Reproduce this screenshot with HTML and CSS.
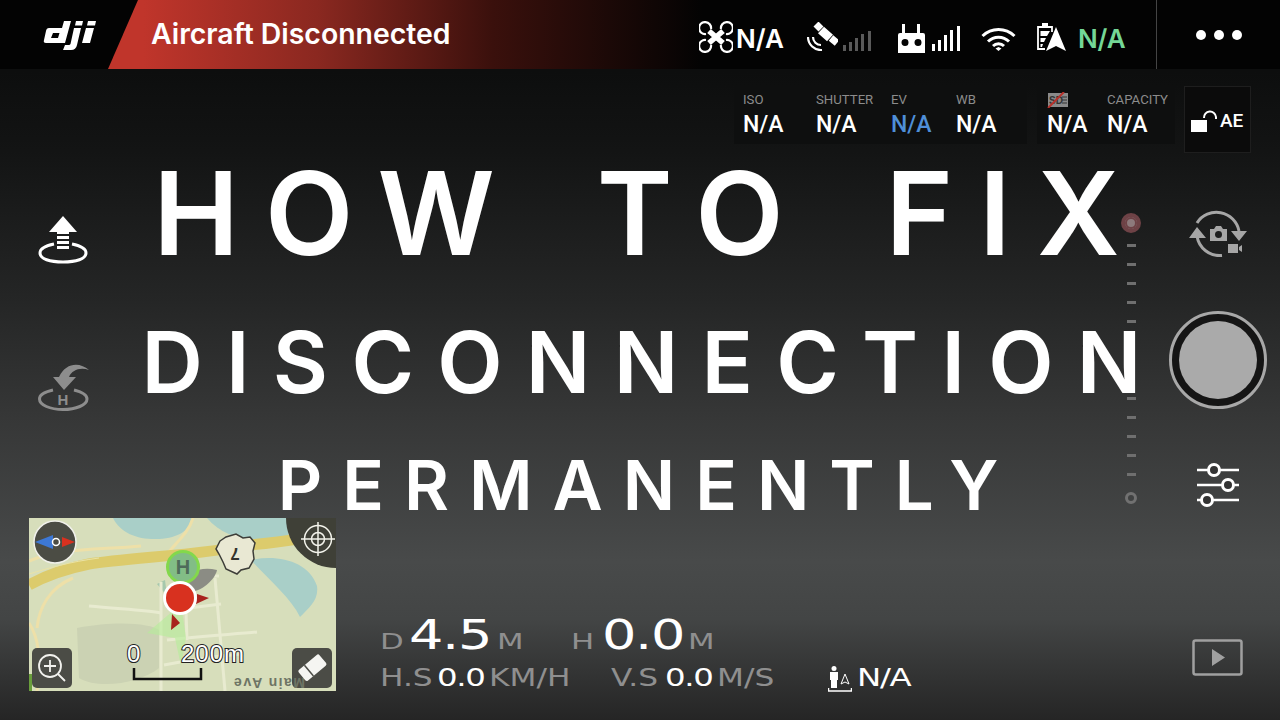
FILE: index.html
```html
<!DOCTYPE html>
<html lang="en">
<head>
    <meta charset="UTF-8">
    <title>How to fix disconnection permanently</title>
    <link rel="stylesheet" href="styles.css">
</head>
<body>
<div class="screen">

    <!-- Top status bar -->
    <div class="topbar">
        <div class="logo-cell">
            <svg class="logo" width="53" height="31" viewBox="0 0 53 31">
                <path fill="#fff" fill-rule="evenodd" d="M4 8H19L21 1H28L22 23H3Q0 23 1 20L3 11Q3.500 8 6 8ZM10 13L8 18H15L16.500 13Z"/>
                <path fill="#fff" d="M33 1H40L39 5.500H32ZM31 8H38L34 25Q33 30 28 30H20L22 25H26Q27 25 27.500 24Z"/>
                <path fill="#fff" d="M45 1H53L52 5.500H44ZM43 8H51L47 23H39Z"/>
            </svg>
        </div>
        <div class="alert">Aircraft Disconnected</div>
        <div class="status">
            <svg class="ic-drone" width="34" height="32" viewBox="0 0 34 32">
                <g fill="none" stroke="#fff" stroke-width="2.200">
                    <path d="M12 8A6 6 0 1 0 7 13"/><path d="M22 8A6 6 0 1 1 27 13"/>
                    <path d="M12 24A6 6 0 1 1 7 19"/><path d="M22 24A6 6 0 1 0 27 19"/>
                </g>
                <path stroke="#fff" stroke-width="5.500" d="M10 10L24 22M24 10L10 22"/>
            </svg>
            <span class="status-na">N/A</span>
            <svg class="ic-sat" width="31" height="29" viewBox="0 0 31 29">
                <path stroke="#fff" stroke-width="7" d="M9 2L14 7"/>
                <path stroke="#fff" stroke-width="7" d="M24 16L30 21"/>
                <path stroke="#fff" stroke-width="9" d="M14 8L23 16"/>
                <g fill="none" stroke="#fff" stroke-width="2.200">
                    <path d="M1 15A13 13 0 0 0 15 28"/><path d="M6 15A8 8 0 0 0 14 23"/>
                </g>
            </svg>
            <svg class="ic-bars" width="29" height="20" viewBox="0 0 29 20">
                <g fill="#5a5a5a"><rect x="0" y="14" width="3" height="6"/><rect x="6" y="11" width="3" height="9"/><rect x="12" y="7" width="3" height="13"/><rect x="18" y="3" width="3" height="17"/><rect x="25" y="0" width="3" height="20"/></g>
            </svg>
            <svg class="ic-remote" width="27" height="29" viewBox="0 0 27 29">
                <path fill="#fff" fill-rule="evenodd" d="M4 0H7V9H19V0H22V9H25Q27 9 27 11V29H0V11Q0 9 2 9H4ZM7 15A3.500 3.500 0 1 0 7.010 22A3.500 3.500 0 1 0 7 15ZM20 15A3.500 3.500 0 1 0 20.010 22A3.500 3.500 0 1 0 20 15Z"/>
            </svg>
            <svg class="ic-bars2" width="29" height="25" viewBox="0 0 29 25">
                <g fill="#fff"><rect x="0" y="18" width="3" height="7"/><rect x="6" y="14" width="3" height="11"/><rect x="12" y="9" width="3" height="16"/><rect x="18" y="4" width="3" height="21"/><rect x="25" y="0" width="3" height="25"/></g>
            </svg>
            <svg class="ic-wifi" width="35" height="23" viewBox="0 0 35 23">
                <g fill="none" stroke="#fff" stroke-width="3">
                    <path d="M1.500 8A23 23 0 0 1 33.500 8"/><path d="M7 13.500A15 15 0 0 1 28 13.500"/><path d="M12 18A8 8 0 0 1 23 18"/>
                </g>
                <path fill="#fff" d="M17.500 19L20.500 20.500L17.500 23L14.500 20.500Z"/>
            </svg>
            <svg class="ic-batt" width="30" height="28" viewBox="0 0 30 28">
                <path fill="none" stroke="#fff" stroke-width="1.800" d="M8 26H1V4H15V9"/>
                <rect x="5" y="0" width="6" height="3" fill="#fff"/>
                <path fill="#fff" d="M3.500 8H13L10 13H3.500ZM3.500 15H9L7 19H3.500ZM3.500 21H6L5 24H3.500Z"/>
                <path fill="#fff" d="M19 4L29 28L19 23L9 28Z"/>
            </svg>
            <span class="status-na status-ok">N/A</span>
        </div>
        <div class="more">
            <span class="dot"></span><span class="dot"></span><span class="dot"></span>
        </div>
    </div>

    <div class="stage">

        <!-- Camera values -->
        <div class="camera-row">
            <div class="cam-box cam-main">
                <div class="cam-col"><p class="cam-label">ISO</p><p class="cam-value">N/A</p></div>
                <div class="cam-col"><p class="cam-label">SHUTTER</p><p class="cam-value">N/A</p></div>
                <div class="cam-col"><p class="cam-label">EV</p><p class="cam-value cam-blue">N/A</p></div>
                <div class="cam-col"><p class="cam-label">WB</p><p class="cam-value">N/A</p></div>
            </div>
            <div class="cam-box cam-store">
                <div class="cam-col">
                    <svg class="ic-sd" width="22" height="16" viewBox="0 0 22 16">
                        <rect x="1" y="1" width="20" height="14" fill="#8a8a8a"/>
                        <text x="2" y="12" class="sd-text">SD</text>
                        <path stroke="#333" d="M15 5H20M15 8H20M15 11H20"/>
                        <path stroke="#b8322c" stroke-width="2" d="M1 16L17 0"/>
                    </svg>
                    <p class="cam-value">N/A</p>
                </div>
                <div class="cam-col"><p class="cam-label">CAPACITY</p><p class="cam-value">N/A</p></div>
            </div>
            <div class="ae-box">
                <svg width="27" height="22" viewBox="0 0 27 22">
                    <rect x="0" y="10" width="16" height="12" fill="#fff"/>
                    <path fill="none" stroke="#fff" stroke-width="2" d="M13 8A6 6 0 0 1 25 7V9"/>
                </svg>
                <span class="ae-text">AE</span>
            </div>
        </div>

        <!-- Flight and camera controls -->
        <div class="middle">
            <div class="left-rail">
                <svg width="50" height="50" viewBox="0 0 50 50">
                    <path fill="#fff" d="M25 1L39 17H31V19H19V17H11Z"/>
                    <path fill="#fff" d="M19 21H31V24H19ZM19 26H31V29H19ZM19 31H31V34H19Z"/>
                    <path fill="none" stroke="#fff" stroke-width="3" d="M16 29C6 31 2 34 2 38C2 44 12 47 25 47C38 47 48 44 48 38C48 34 44 31 34 29"/>
                </svg>
                <svg class="rail-home" width="52" height="50" viewBox="0 0 52 50">
                    <path fill="#8d8d8d" d="M51 8C42 0 28 0 21 15H15L26 28L38 15H31C34 8 42 5 51 8Z"/>
                    <path fill="none" stroke="#8d8d8d" stroke-width="3" d="M15 28C6 30 1.500 33 1.500 37C1.500 43 12 47.500 25 47.500C38 47.500 49 43 49 37C49 33 44 30 36 28"/>
                    <text x="25" y="43" class="home-h">H</text>
                </svg>
            </div>
            <div class="right-rail">
                <div class="zoom-slider">
                    <span class="slider-top"></span>
                    <span class="tick"></span><span class="tick"></span><span class="tick"></span><span class="tick"></span><span class="tick"></span>
                    <span class="tick tick-hidden"></span><span class="tick tick-hidden"></span><span class="tick tick-hidden"></span>
                    <span class="tick"></span><span class="tick"></span><span class="tick"></span><span class="tick"></span><span class="tick"></span>
                    <span class="slider-bottom"></span>
                </div>
                <div class="shoot-col">
                    <svg width="58" height="47" viewBox="0 0 58 47">
                        <g fill="none" stroke="#a6a6a6" stroke-width="3">
                            <path d="M8 13A23 23 0 0 1 50 21"/><path d="M8 26A23 23 0 0 0 33 45.500"/>
                        </g>
                        <path fill="#a6a6a6" d="M42 21H58L50 31ZM0 28H17L8 17Z"/>
                        <path fill="#a6a6a6" fill-rule="evenodd" d="M21 19H25L27 16H32L34 19H38V31H21ZM29.500 21A3.500 3.500 0 1 0 29.510 28A3.500 3.500 0 1 0 29.500 21Z"/>
                        <path fill="#a6a6a6" d="M39 34H49V43H39ZM50 37L53 35V42L50 40Z"/>
                    </svg>
                    <div class="shutter"><span class="shutter-in"></span></div>
                    <svg width="44" height="46" viewBox="0 0 44 46">
                        <path stroke="#fff" stroke-width="2.500" d="M1 7H43M1 22H43M1 37H43"/>
                        <g fill="#333" stroke="#fff" stroke-width="3">
                            <circle cx="18" cy="7" r="5.500"/><circle cx="32" cy="22" r="5.500"/><circle cx="11" cy="37" r="5.500"/>
                        </g>
                    </svg>
                </div>
            </div>
        </div>

        <!-- Map, telemetry, playback -->
        <div class="bottom">
            <svg class="map" width="307" height="173" viewBox="0 0 307 173">
                <rect width="307" height="173" fill="#d7debb"/>
                <path fill="#a9cfc8" d="M84 0H164C160 12 150 20 130 21C110 22 92 16 84 0Z"/>
                <path fill="#a9cfc8" d="M178 0H262L258 24C230 26 196 22 178 0Z"/>
                <path fill="#a9cfc8" d="M222 42C250 36 280 44 288 68C290 82 280 90 271 99C262 80 240 62 222 42Z"/>
                <path fill="#cbd2b3" d="M48 110C90 102 122 106 130 112V150C112 165 70 172 50 160Z"/>
                <path fill="#75b1a0" opacity="0.5" d="M136 62L128 66L138 78Z"/>
                <g fill="none" stroke="#eee0a8" stroke-width="3">
                    <path d="M0 43C30 30 70 32 112 28"/>
                    <path d="M164 0C160 14 148 24 138 36"/>
                    <path d="M0 105C10 120 12 140 8 173"/>
                    <path d="M44 60C20 70 10 90 8 110"/>
                </g>
                <g fill="none" stroke="#e8ebd0" stroke-width="3">
                    <path d="M60 88C90 91 118 92 132 95"/>
                    <path d="M132 64V173"/>
                    <path d="M186 60L196 173"/>
                    <path d="M138 122C170 118 210 116 228 114"/>
                    <path d="M135 147C160 142 190 138 212 136"/>
                    <path d="M140 58H190"/>
                    <path d="M160 90L192 86"/>
                    <path d="M156 64L158 122"/>
                </g>
                <path fill="none" stroke="#dccb6c" stroke-width="11" d="M0 67C16 58 40 50 60 46C100 40 180 36 221 27C250 24 280 20 307 14"/>
                <path fill="none" stroke="#eae3a6" stroke-width="1" d="M0 56C20 50 40 44 70 40"/>
                <path fill="#e9e8d3" stroke="#3d3d38" stroke-width="1.500" d="M191 23L197 19L207 16L214 20L221 19L226 25L224 33L225 41L220 50L212 52L208 56L197 51L194 44L190 36L187 31Z"/>
                <text x="206" y="42" class="shield-num" transform="rotate(180 206 36)">7</text>
                <path fill="#8b8c84" d="M152 65C158 54 172 48 188 52C186 62 172 74 160 74Z"/>
                <path fill="#b5ec9a" opacity="0.6" d="M118 115L152 86L157 120L152 148L146 120Z"/>
                <circle cx="154" cy="49" r="15.500" fill="#82bd86" stroke="#83d84c" stroke-width="3"/>
                <text x="154" y="56" class="home-letter">H</text>
                <path fill="#a8231e" d="M168 76L180 80L167 86ZM143 96L151 105L142 112Z"/>
                <circle cx="151" cy="80" r="17" fill="#fff"/>
                <circle cx="151" cy="80" r="14" fill="#d8311f"/>
                <circle cx="26" cy="24" r="21" fill="#4b4c44" stroke="#f0f0ea" stroke-width="1.500"/>
                <path fill="#3d78d4" d="M6 24L24 17V31Z"/>
                <path fill="#d8311f" d="M46 24L33 19V29Z"/>
                <circle cx="27" cy="24" r="3.500" fill="#4b4c44" stroke="#fff" stroke-width="1.500"/>
                <circle cx="307" cy="0" r="50" fill="#3f4037"/>
                <g fill="none" stroke="#f2f2ea" stroke-width="1.500">
                    <circle cx="289" cy="21" r="13.500"/><circle cx="289" cy="21" r="6.500"/>
                    <path d="M272 21H306M289 4V38"/>
                </g>
                <rect x="0" y="156" width="3" height="17" fill="#6a9e3c"/>
                <rect x="3" y="130" width="40" height="40" rx="5" fill="#4b4c46"/>
                <g fill="none" stroke="#f2f2ee" stroke-width="1.800">
                    <circle cx="21" cy="148" r="11"/>
                    <path d="M21 142V154M15 148H27M29 156L36 163"/>
                </g>
                <rect x="263" y="130" width="40" height="40" rx="5" fill="#4b4c46"/>
                <text x="200" y="178" class="main-ave" transform="rotate(180 238 169)">Main Ave</text>
                <g transform="rotate(-40 283 150)">
                    <rect x="270" y="143" width="27" height="14" rx="2" fill="#f5f5f2"/>
                    <path stroke="#4b4c46" stroke-width="1.500" d="M279 143V157"/>
                </g>
                <text x="98" y="144" class="scale-text">0</text>
                <text x="152" y="144" class="scale-text scale-wide">200m</text>
                <path fill="none" stroke="#111" stroke-width="2.500" d="M105 150V161H172V150"/>
            </svg>

            <div class="telemetry">
                <div class="tele-big">
                    <span class="t-label t-md">D</span><span class="t-val t-lg">4.5</span><span class="t-label t-md">M</span>
                    <span class="t-label t-md">H</span><span class="t-val t-lg">0.0</span><span class="t-label t-md">M</span>
                </div>
                <div class="tele-small">
                    <span class="t-label t-sm">H.S</span><span class="t-val t-sm">0.0</span><span class="t-label t-sm">KM/H</span>
                    <span class="t-label t-sm">V.S</span><span class="t-val t-sm">0.0</span><span class="t-label t-sm">M/S</span>
                    <svg class="ic-person" width="24" height="26" viewBox="0 0 24 26">
                        <circle cx="6" cy="2.500" r="2.500" fill="#fff"/>
                        <path fill="#fff" d="M2 6H10V14H9V22H3V14H2Z"/>
                        <path fill="none" stroke="#fff" stroke-width="1" d="M17 8L21 18L17 16L13 18Z"/>
                        <path stroke="#fff" stroke-width="1.500" d="M0 25H24M.5 22V25M23.500 22V25"/>
                    </svg>
                    <span class="t-val t-sm">N/A</span>
                </div>
            </div>

            <svg class="play" width="51" height="37" viewBox="0 0 51 37">
                <rect x="1.500" y="1.500" width="48" height="34" rx="2" fill="none" stroke="#a0a0a0" stroke-width="2.500"/>
                <path fill="#a0a0a0" d="M20 10L33 18.500L20 27Z"/>
            </svg>
        </div>

        <!-- Title over the whole view -->
        <div class="title">
            <h1 class="title-one">HOW TO FIX</h1>
            <h2 class="title-two">DISCONNECTION</h2>
            <h2 class="title-three">PERMANENTLY</h2>
        </div>
    </div>
</div>
</body>
</html>
```

FILE: styles.css
```css
html, body {
    margin: 0;
    padding: 0;
}

body {
    font-family: Inter, "Liberation Sans", sans-serif;
    color: white;
    background: #000;
}

p, h1, h2 {
    margin: 0;
}

svg {
    display: block;
    flex: none;
}

.screen {
    width: 1280px;
    height: 720px;
    overflow: hidden;
    display: flex;
    flex-direction: column;
    background: linear-gradient(180deg, #0d0e0e 0%, #0d0e0e 10%, #131414 21%, #252626 42%, #363737 58%, #484a4a 78%, #434545 86%, #252525 100%);
}

/* Top status bar */
.topbar {
    height: 69px;
    flex: none;
    display: flex;
    background: #030303;
}

.logo-cell {
    width: 108px;
    flex: none;
    padding: 20px 0 0 43px;
    box-sizing: border-box;
}

.alert {
    width: 700px;
    margin-right: -109px;
    padding: 18px 0 0 43px;
    box-sizing: border-box;
    font-size: 28.400px;
    font-weight: 600;
    line-height: 32px;
    background: linear-gradient(90deg, #c0352b 5%, #8a2820 30%, #3a100c 55%, #030303 85%);
    clip-path: polygon(30px 0, 100% 0, 100% 100%, 0 100%);
    flex: none;
}

.status {
    position: relative;
    width: 457px;
    flex: none;
    display: flex;
    align-items: flex-start;
}

.status-na {
    font-size: 26px;
    font-weight: 600;
    line-height: 30px;
    margin-top: 24px;
}

.status-ok {
    color: #74d796;
    margin-left: 11px;
}

.ic-drone { margin: 21px 3px 0 0; }
.ic-sat { margin: 22px 0 0 23px; }
.ic-bars { margin: 31px 0 0 5px; }
.ic-remote { margin: 24px 0 0 26px; }
.ic-bars2 { margin: 26px 0 0 7px; }
.ic-wifi { margin: 28px 0 0 20px; }
.ic-batt { margin: 23px 0 0 21px; }

.more {
    width: 124px;
    flex: none;
    border-left: 1px solid #444;
    box-sizing: border-box;
    display: flex;
    gap: 8px;
    padding: 30px 0 0 39px;
}

.dot {
    width: 10px;
    height: 10px;
    border-radius: 50%;
    background: white;
}

/* Everything under the bar */
.stage {
    position: relative;
    flex: 1;
    display: flex;
    flex-direction: column;
}

.camera-row {
    height: 67px;
    margin-top: 17px;
    padding-right: 29px;
    display: flex;
    justify-content: flex-end;
    align-items: flex-start;
    flex: none;
}

.cam-box {
    height: 58px;
    background: #0e0f0f;
    display: flex;
    box-sizing: border-box;
    padding: 6px 0 0 9px;
}

.cam-main { width: 293px; margin-right: 10px; }
.cam-store { width: 138px; margin-right: 9px; padding-left: 10px; }

.cam-main .cam-col:nth-child(1) { width: 73px; }
.cam-main .cam-col:nth-child(2) { width: 75px; }
.cam-main .cam-col:nth-child(3) { width: 65px; }
.cam-store .cam-col:nth-child(1) { width: 60px; }

.cam-label {
    font-family: Roboto, sans-serif;
    font-size: 13.200px;
    line-height: 16px;
    color: #8c8c8c;
}

.cam-value {
    font-family: Roboto, sans-serif;
    font-size: 23px;
    font-weight: 500;
    line-height: 28px;
    margin-top: 3px;
}

.cam-blue {
    color: #4f8fd8;
}

.sd-text {
    font-family: "Liberation Sans", sans-serif;
    font-size: 10px;
    font-weight: bold;
    fill: #333;
}

.ae-box {
    width: 67px;
    height: 67px;
    box-sizing: border-box;
    background: #0b0b0b;
    border: 1px solid #1e1e1e;
    display: flex;
    padding: 23px 0 0 6px;
    gap: 2px;
}

.ae-text {
    font-family: Roboto, sans-serif;
    font-size: 19px;
    font-weight: 500;
    line-height: 22px;
    margin-top: 0;
}

.middle {
    height: 365px;
    flex: none;
    display: flex;
    justify-content: space-between;
}

.left-rail {
    padding: 62px 0 0 38px;
    display: flex;
    flex-direction: column;
    gap: 97px;
}

.right-rail {
    display: flex;
    padding-right: 33px;
}

/* Zoom slider */
.zoom-slider {
    width: 20px;
    margin: 60px 48px 0 0;
    height: 293px;
    display: flex;
    flex-direction: column;
    align-items: center;
}

.slider-top {
    width: 12px;
    height: 12px;
    border-radius: 50%;
    border: 4px solid #6e4246;
    background: #8d7a7c;
    box-shadow: inset 0 0 0 2px #6e4246;
    flex: none;
    margin-bottom: 11px;
}

.tick {
    width: 9px;
    height: 3px;
    background: #6f6f6f;
    margin-bottom: 16.100px;
    flex: none;
}

.tick-hidden {
    visibility: hidden;
}

.slider-bottom {
    width: 6px;
    height: 6px;
    border-radius: 50%;
    border: 3px solid #717171;
    flex: none;
}

.shoot-col {
    padding-top: 57px;
    width: 58px;
    display: flex;
    flex-direction: column;
    align-items: center;
    gap: 54px;
}

.shutter {
    width: 98px;
    height: 98px;
    flex: none;
    box-sizing: border-box;
    border-radius: 50%;
    border: 3px solid #a8a8a8;
    background: #151515;
    display: flex;
    align-items: center;
    justify-content: center;
}

.shutter-in {
    width: 78px;
    height: 78px;
    border-radius: 50%;
    background: #aaaaaa;
}

/* Bottom row */
.bottom {
    display: flex;
    padding-left: 29px;
}

.shield-num {
    font-family: "Liberation Sans", sans-serif;
    font-size: 17px;
    font-weight: bold;
    text-anchor: middle;
    fill: #33332e;
}

.home-letter {
    font-family: "Liberation Sans", sans-serif;
    font-size: 20px;
    font-weight: bold;
    text-anchor: middle;
    fill: #4e6b5a;
}

.home-h {
    font-family: "Liberation Sans", sans-serif;
    font-size: 15px;
    font-weight: bold;
    text-anchor: middle;
    fill: #8d8d8d;
}

.scale-text {
    font-family: "Liberation Sans", sans-serif;
    font-size: 24px;
    fill: #fff;
    stroke: #222;
    stroke-width: 2px;
    paint-order: stroke;
}

.scale-wide {
    letter-spacing: 1px;
}

.main-ave {
    font-family: "Liberation Sans", sans-serif;
    font-size: 14px;
    font-weight: bold;
    letter-spacing: 1.500px;
    fill: #6e7565;
}

.telemetry {
    margin-left: 44px;
    padding-top: 97px;
}

.tele-big {
    display: grid;
    grid-template-columns: 29px 88px 74px 31px 86px 28px;
    align-items: baseline;
    height: 40px;
}

.tele-small {
    display: grid;
    grid-template-columns: 57px 52px 122px 54px 52px 111px 29px 56px;
    align-items: baseline;
    margin-top: 11px;
}

.t-label, .t-val {
    font-family: "DejaVu Sans", sans-serif;
    transform: scaleX(1.250);
    transform-origin: left;
    white-space: nowrap;
    line-height: 1;
}

.t-label {
    color: #8f8f8f;
}

.t-label.t-md { transform: scaleX(1.400); }
.t-label.t-sm { transform: scaleX(1.300); }
.t-val.t-sm { letter-spacing: -1px; transform: scaleX(1.350); }
.t-lg { font-size: 41px; letter-spacing: -1px; transform: scaleX(1.320); }
.t-md { font-size: 22px; }
.t-sm { font-size: 24px; }

.ic-person {
    align-self: end;
}

.play {
    margin: 121px 37px 0 auto;
}

/* Big title */
.title {
    position: absolute;
    left: 0;
    right: 0;
    top: 80px;
    text-align: center;
}

.title-one {
    font-size: 115px;
    font-weight: 600;
    line-height: 130px;
    letter-spacing: 26px;
    word-spacing: 21px;
    padding-left: 19px;
}

.title-two {
    font-size: 85px;
    font-weight: 600;
    line-height: 100px;
    letter-spacing: 23.250px;
    margin-top: 33.500px;
    padding-left: 26px;
}

.title-three {
    font-size: 69px;
    font-weight: 600;
    line-height: 80px;
    letter-spacing: 20px;
    margin-top: 32.500px;
    padding-left: 16px;
}
```
